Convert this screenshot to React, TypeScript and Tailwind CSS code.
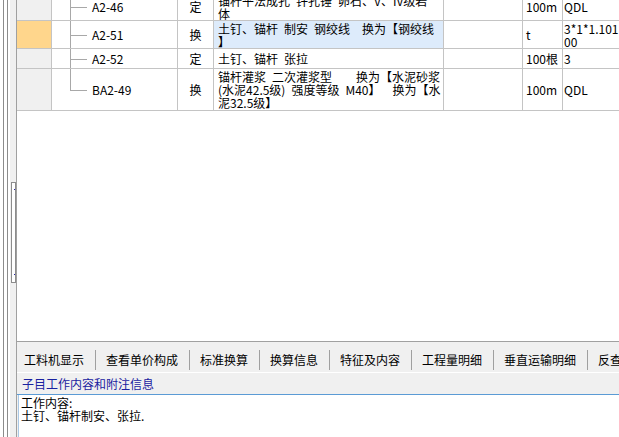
import React from "react";

type Row = {
  code: string;
  type: string;
  name: string[];
  unit: string;
  expr: string[];
  h: string;
  active?: boolean;
  last?: boolean;
};

const S = "\u2002"; // half-width gap, like the old bitmap font's space

const rows: Row[] = [
  {
    code: "A2-46",
    type: "定",
    name: [`锚杆平法成孔${S}钎孔锤${S}卵石、V、IV级岩`, "体"],
    unit: "100m",
    expr: ["QDL"],
    h: "h-[28px]",
  },
  {
    code: "A2-51",
    type: "换",
    name: [`土钉、锚杆${S}制安${S}钢绞线${S}${S}换为【钢绞线`, "】"],
    unit: "t",
    expr: ["3*1*1.101", "00"],
    h: "h-[28px]",
    active: true,
  },
  {
    code: "A2-52",
    type: "定",
    name: [`土钉、锚杆${S}张拉`],
    unit: "100根",
    expr: ["3"],
    h: "h-[20px]",
  },
  {
    code: "BA2-49",
    type: "换",
    name: [
      `锚杆灌浆${S}二次灌浆型${S}${S}${S}${S}换为【水泥砂浆`,
      `(水泥42.5级)${S}强度等级${S}M40】${S}${S}换为【水`,
      "泥32.5级】",
    ],
    unit: "100m",
    expr: ["QDL"],
    h: "h-[42px]",
    last: true,
  },
];

const tabs = ["工料机显示", "查看单价构成", "标准换算", "换算信息", "特征及内容", "工程量明细", "垂直运输明细", "反查"];

function Lines({ lines }: { lines: string[] }) {
  return (
    <div className="whitespace-pre leading-[13px]">
      {lines.map((l, i) => (
        <div key={i}>{l}</div>
      ))}
    </div>
  );
}

function GridRow({ row }: { row: Row }) {
  const cell = "flex shrink-0 items-center overflow-hidden border-r border-[#c4c4c4]";
  return (
    <div className={`flex border-b border-[#c4c4c4] ${row.h}`}>
      <div className={`${cell} w-[35px] ${row.active ? "bg-[#ffd68c]" : "bg-[#f0f0f0]"}`} />
      <div className={`${cell} w-[126px] items-stretch`}>
        <svg width="17" className="ml-[18px] h-full shrink-0" shapeRendering="crispEdges">
          <line x1="0.5" y1="0" x2="0.5" y2={row.last ? "50%" : "100%"} stroke="#a8a8a8" />
          <rect x="0" y="50%" width="17" height="1" fill="#a8a8a8" />
        </svg>
        <span className="ml-[5px] self-center">{row.code}</span>
      </div>
      <div className={`${cell} w-[36px] justify-center`}>{row.type}</div>
      <div className={`${cell} w-[230px] pl-[4px] ${row.active ? "bg-[#ddebfb]" : ""}`}>
        <Lines lines={row.name} />
      </div>
      <div className={`${cell} w-[79px]`} />
      <div className={`${cell} w-[40px] pl-[3px]`}>{row.unit}</div>
      <div className={`${cell} w-[80px] pl-[1px]`}>
        <Lines lines={row.expr} />
      </div>
    </div>
  );
}

export default function App() {
  return (
    <div className="flex h-[437px] w-[619px] overflow-hidden bg-[#f0f0f0] font-['Noto_Sans_CJK_SC',sans-serif] text-[12px] text-black">
      {/* left splitter strip */}
      <div className="flex w-[16px] shrink-0 bg-white">
        <div className="ml-[3px] w-px bg-[#8c8c8c]" />
        <div className="ml-[3px] w-px bg-[#8c8c8c]" />
        <div className="ml-[2px] w-[6px] bg-[#f0f0f0] pt-[182px]">
          <div className="ml-px flex h-[101px] w-[5px] flex-col items-end justify-between border border-[#8c8c8c] bg-white pt-[6px] pb-[7px]">
            <div className="h-px w-px bg-[#2a2aa8]" />
            <div className="h-px w-px bg-[#2a2aa8]" />
          </div>
        </div>
      </div>

      <div className="flex min-w-0 flex-1 flex-col border-l border-[#a0a0a0]">
        {/* grid */}
        <div className="h-[342px] shrink-0 overflow-hidden border-b border-[#a0a0a0] bg-white">
          <div className="-mt-[7px]">
            {rows.map((r) => (
              <GridRow key={r.code} row={r} />
            ))}
          </div>
        </div>

        {/* tabs */}
        <div className="flex h-[30px] shrink-0 overflow-hidden whitespace-nowrap pt-[8px]">
          {tabs.map((t, i) => (
            <div
              key={t}
              className={`flex h-[20px] shrink-0 items-center border-r border-[#a0a0a0] pr-[11px] ${i === 0 ? "pl-[7px]" : "pl-[10px]"}`}
            >
              {t}
            </div>
          ))}
        </div>
        <div className="h-px shrink-0 bg-white" />
        <div className="flex h-[21px] shrink-0 items-center pl-[5px] text-[#1a22a0]">子目工作内容和附注信息</div>
        <div className="h-px shrink-0 bg-[#5b9bd5]" />
        <div className="ml-px flex-1 border-l border-[#a9c8e6] bg-white pl-[2px] pt-[1px] leading-[13px]">
          <div>工作内容:</div>
          <div>土钉、锚杆制安、张拉.</div>
        </div>
      </div>
    </div>
  );
}
